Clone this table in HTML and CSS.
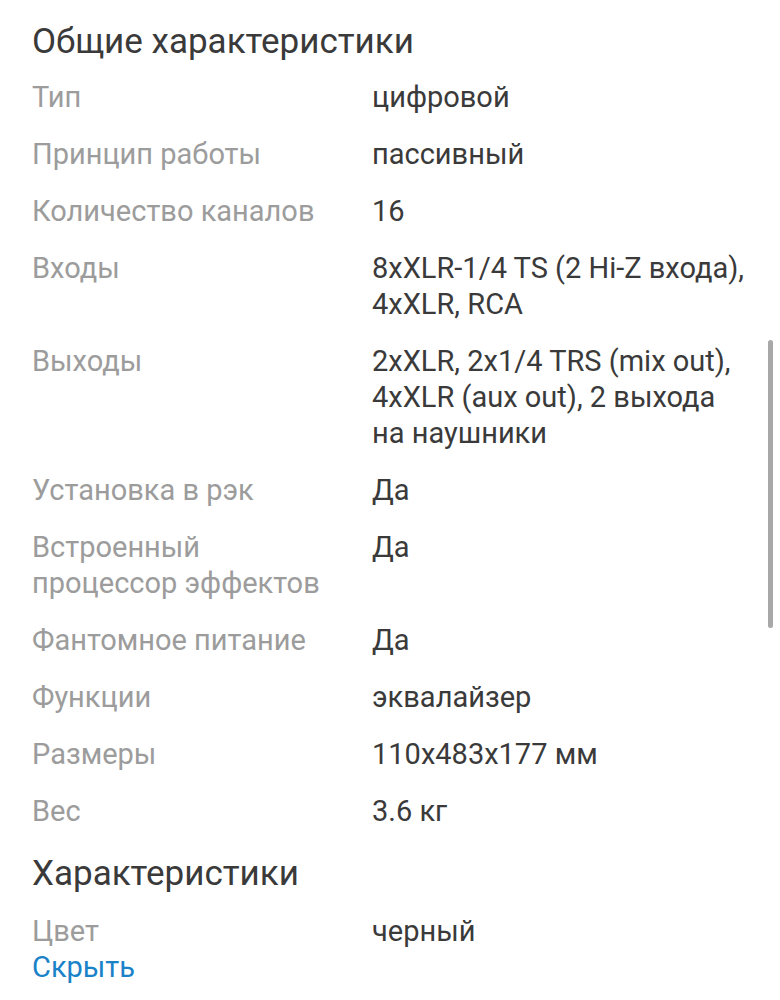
FILE: index.html
```html
<!DOCTYPE html>
<html lang="ru">
<head>
<meta charset="utf-8">
<link rel="stylesheet" href="styles.css">
</head>
<body>
<div class="page">
  <h2 class="section-title">Общие характеристики</h2>
  <dl class="specs">
    <div class="row"><dt>Тип</dt><dd>цифровой</dd></div>
    <div class="row"><dt>Принцип работы</dt><dd>пассивный</dd></div>
    <div class="row"><dt>Количество каналов</dt><dd>16</dd></div>
    <div class="row"><dt>Входы</dt><dd>8xXLR-1/4 TS (2 Hi-Z входа), 4xXLR, RCA</dd></div>
    <div class="row"><dt>Выходы</dt><dd>2xXLR, 2x1/4 TRS (mix out), 4xXLR (aux out), 2 выхода на наушники</dd></div>
    <div class="row"><dt>Установка в рэк</dt><dd>Да</dd></div>
    <div class="row"><dt>Встроенный процессор эффектов</dt><dd>Да</dd></div>
    <div class="row"><dt>Фантомное питание</dt><dd>Да</dd></div>
    <div class="row"><dt>Функции</dt><dd>эквалайзер</dd></div>
    <div class="row"><dt>Размеры</dt><dd>110x483x177 мм</dd></div>
    <div class="row"><dt>Вес</dt><dd>3.6 кг</dd></div>
  </dl>
  <h2 class="section-title second">Характеристики</h2>
  <dl class="specs specs-short">
    <div class="row last"><dt>Цвет</dt><dd>черный</dd></div>
  </dl>
  <a class="toggle" href="#">Скрыть</a>
</div>
<div class="scrollbar"></div>
</body>
</html>
```
FILE: styles.css
```css
html, body {
  margin: 0;
  padding: 0;
  background: #ffffff;
}
body {
  font-family: Roboto, "Noto Sans", sans-serif;
  color: #3a3a3a;
  width: 780px;
  height: 1000px;
  overflow: hidden;
  position: relative;
}
.page {
  padding: 20px 28px 0 32px;
}
.section-title {
  margin: 0;
  font-size: 35px;
  font-weight: 400;
  line-height: 44px;
  color: #3a3a3a;
}
.section-title.second {
  margin-top: 2px;
}
.specs {
  margin: 0;
  padding-top: 15px;
}
.specs-short {
  padding-top: 17px;
}
.row {
  display: grid;
  grid-template-columns: 340px 1fr;
  font-size: 29px;
  line-height: 36px;
  padding-bottom: 21px;
}
.row.last {
  padding-bottom: 0;
}
.row dt {
  color: #9c9c9c;
  padding-right: 40px;
}
.row dd {
  margin: 0;
  color: #3a3a3a;
}
.toggle {
  display: block;
  font-size: 29px;
  line-height: 36px;
  color: #1a82c8;
  text-decoration: none;
}
.scrollbar {
  position: absolute;
  left: 768px;
  top: 340px;
  width: 5px;
  height: 288px;
  border-radius: 3px;
  background: #a8a8a8;
}
```
